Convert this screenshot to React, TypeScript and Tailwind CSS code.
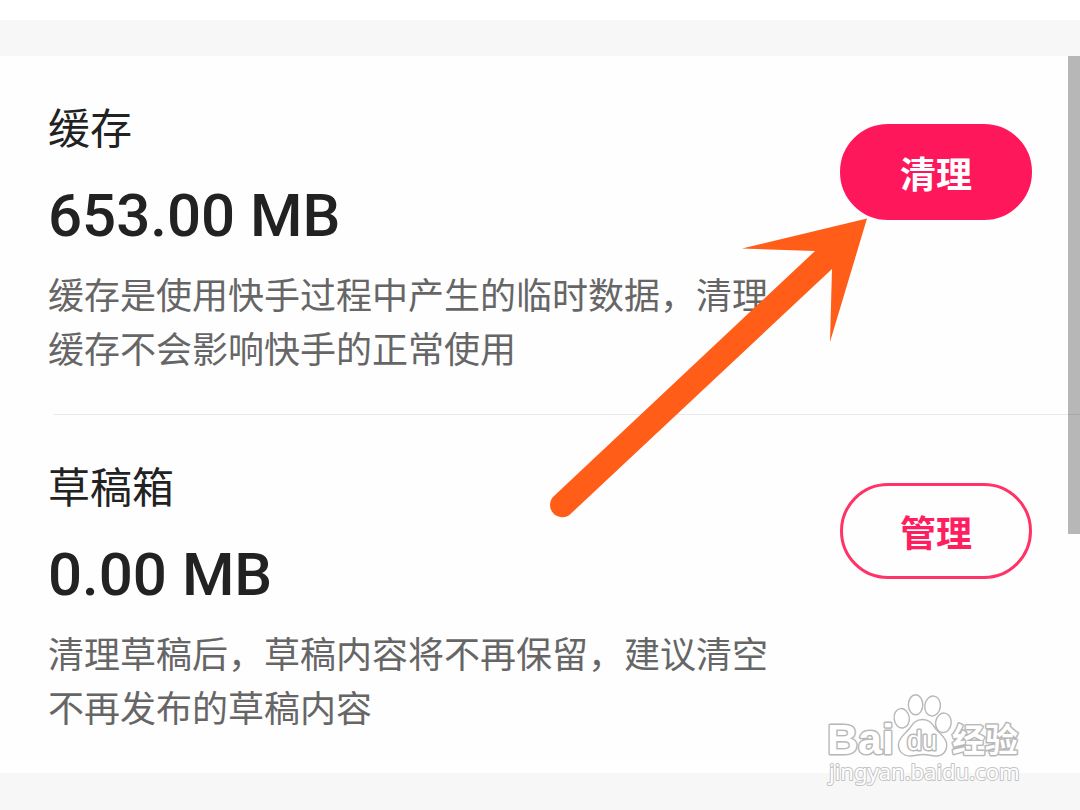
import clsx from "clsx";

const sections = [
  {
    title: "缓存",
    size: "653.00 MB",
    description: "缓存是使用快手过程中产生的临时数据，清理缓存不会影响快手的正常使用",
    action: "清理",
    filled: true,
  },
  {
    title: "草稿箱",
    size: "0.00 MB",
    description: "清理草稿后，草稿内容将不再保留，建议清空不再发布的草稿内容",
    action: "管理",
    filled: false,
  },
];

function Arrow() {
  return (
    <svg
      className="pointer-events-none absolute top-[210px] right-[200px]"
      width="340"
      height="320"
      viewBox="540 210 340 320"
      aria-hidden="true"
    >
      <path
        d="M867 218.5 L742 248.5 L815 251 L554 496 A12 12 0 0 0 570.5 514 L832 269 L830 342 Z"
        fill="#ff5d18"
      />
    </svg>
  );
}

function Watermark() {
  return (
    <svg
      className="pointer-events-none absolute top-[690px] right-[50px]"
      width="210"
      height="100"
      viewBox="820 690 210 100"
      fill="#fff"
      stroke="#b8b8b8"
      strokeLinejoin="round"
    >
      <g className="font-['Liberation_Sans','Noto_Sans_CJK_SC',sans-serif]" strokeWidth="3" paintOrder="stroke">
        <text x="827" y="754" fontSize="43" fontWeight="700">Bai</text>
        <text x="952" y="752" fontSize="33" fontWeight="700">经验</text>
      </g>
      <g strokeWidth="1.4">
        <ellipse cx="901.7" cy="718.3" rx="7.6" ry="9.8" transform="rotate(-8 901.7 718.3)" />
        <ellipse cx="915.6" cy="704.8" rx="7.2" ry="10" />
        <ellipse cx="932.6" cy="706" rx="7.8" ry="10" transform="rotate(8 932.6 706)" />
        <ellipse cx="943.4" cy="722.8" rx="7.8" ry="9.8" transform="rotate(8 943.4 722.8)" />
        <path d="M922.5 719.5 C916 719.5 913 723 909.5 728.5 C906 733 899 737 898.5 744 C898 751 903 756 910 756 C915 756 918 754.5 923 754.5 C928 754.5 931 756 936 756 C943 756 947.5 751 946.5 743 C945.5 737 939 733 935.5 728.5 C932 723 929 719.5 922.5 719.5 Z" />
      </g>
      <text
        x="907"
        y="750"
        fontSize="27"
        strokeWidth="3"
        paintOrder="stroke"
        className="font-['Liberation_Sans',sans-serif]"
      >
        du
      </text>
      <text
        x="829"
        y="780"
        fontSize="22"
        strokeWidth="2"
        stroke="#c4c4c4"
        paintOrder="stroke"
        className="font-['Noto_Sans',sans-serif]"
      >
        jingyan.baidu.com
      </text>
    </svg>
  );
}

export default function App() {
  return (
    <div className="relative min-h-screen overflow-hidden bg-[#f7f7f7] pt-5 font-['Roboto','Noto_Sans_CJK_SC',sans-serif] text-[#222]">
      <div className="absolute inset-x-0 top-0 h-5 bg-white" />
      <main className="mt-9 bg-[#fefefe]">
        {sections.map((section, index) => (
          <section key={section.title}>
            {index > 0 && <hr className="ml-[54px] border-t border-[#e8e8e8]" />}
            <div className="flex items-start justify-between px-12 pt-11 pb-9">
              <div className="max-w-[720px]">
                <h2 className="text-[42px] leading-[60px]">{section.title}</h2>
                <p className="mt-5 text-[60px] leading-[72px] font-medium">{section.size}</p>
                <p className="mt-[18px] text-[36px] leading-[54px] text-[#666]">{section.description}</p>
              </div>
              <button
                type="button"
                className={clsx(
                  "mt-6 h-24 w-48 shrink-0 rounded-full border-3 pt-2 text-[36px] font-bold",
                  section.filled
                    ? "border-[#ff175c] bg-[#ff175c] text-white"
                    : "border-[#ff3368] text-[#ff1f60]"
                )}
              >
                {section.action}
              </button>
            </div>
          </section>
        ))}
      </main>
      <div className="absolute top-14 right-0 h-[478px] w-3 bg-black/28" />
      <Arrow />
      <Watermark />
    </div>
  );
}
